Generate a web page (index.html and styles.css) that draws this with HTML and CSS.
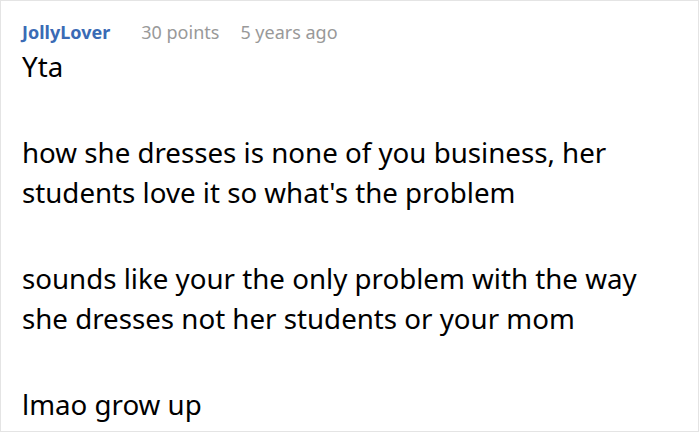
FILE: index.html
```html
<!DOCTYPE html>
<html>
<head>
<meta charset="utf-8">
<link rel="stylesheet" href="styles.css">
</head>
<body>
<div class="comment">
  <div class="meta">
    <span class="author">JollyLover</span>
    <span class="info">30 points</span>
    <span class="info">5 years ago</span>
  </div>
  <div class="text">
    <p>Yta</p>
    <p>how she dresses is none of you business, her students love it so what's the problem</p>
    <p>sounds like your the only problem with the way she dresses not her students or your mom</p>
    <p>lmao grow up</p>
  </div>
</div>
</body>
</html>
```

FILE: styles.css
```css
html, body {
  margin: 0;
  padding: 0;
  background: #fff;
}
.comment {
  box-sizing: border-box;
  width: 699px;
  height: 432px;
  border: 1px solid #e4e4e4;
  padding: 19px 46px 0 21px;
  font-family: "Noto Sans", sans-serif;
  overflow: hidden;
}
.meta {
  display: flex;
  gap: 21px;
  font-size: 18px;
  line-height: 24px;
}
.author {
  color: #3a6bb5;
  font-weight: bold;
  margin-right: 10px;
}
.info {
  color: #999;
}
.text {
  font-size: 27.7px;
  line-height: 40px;
  color: #000;
  margin-top: 2px;
}
.text p {
  margin: 0 0 46px;
}
```
